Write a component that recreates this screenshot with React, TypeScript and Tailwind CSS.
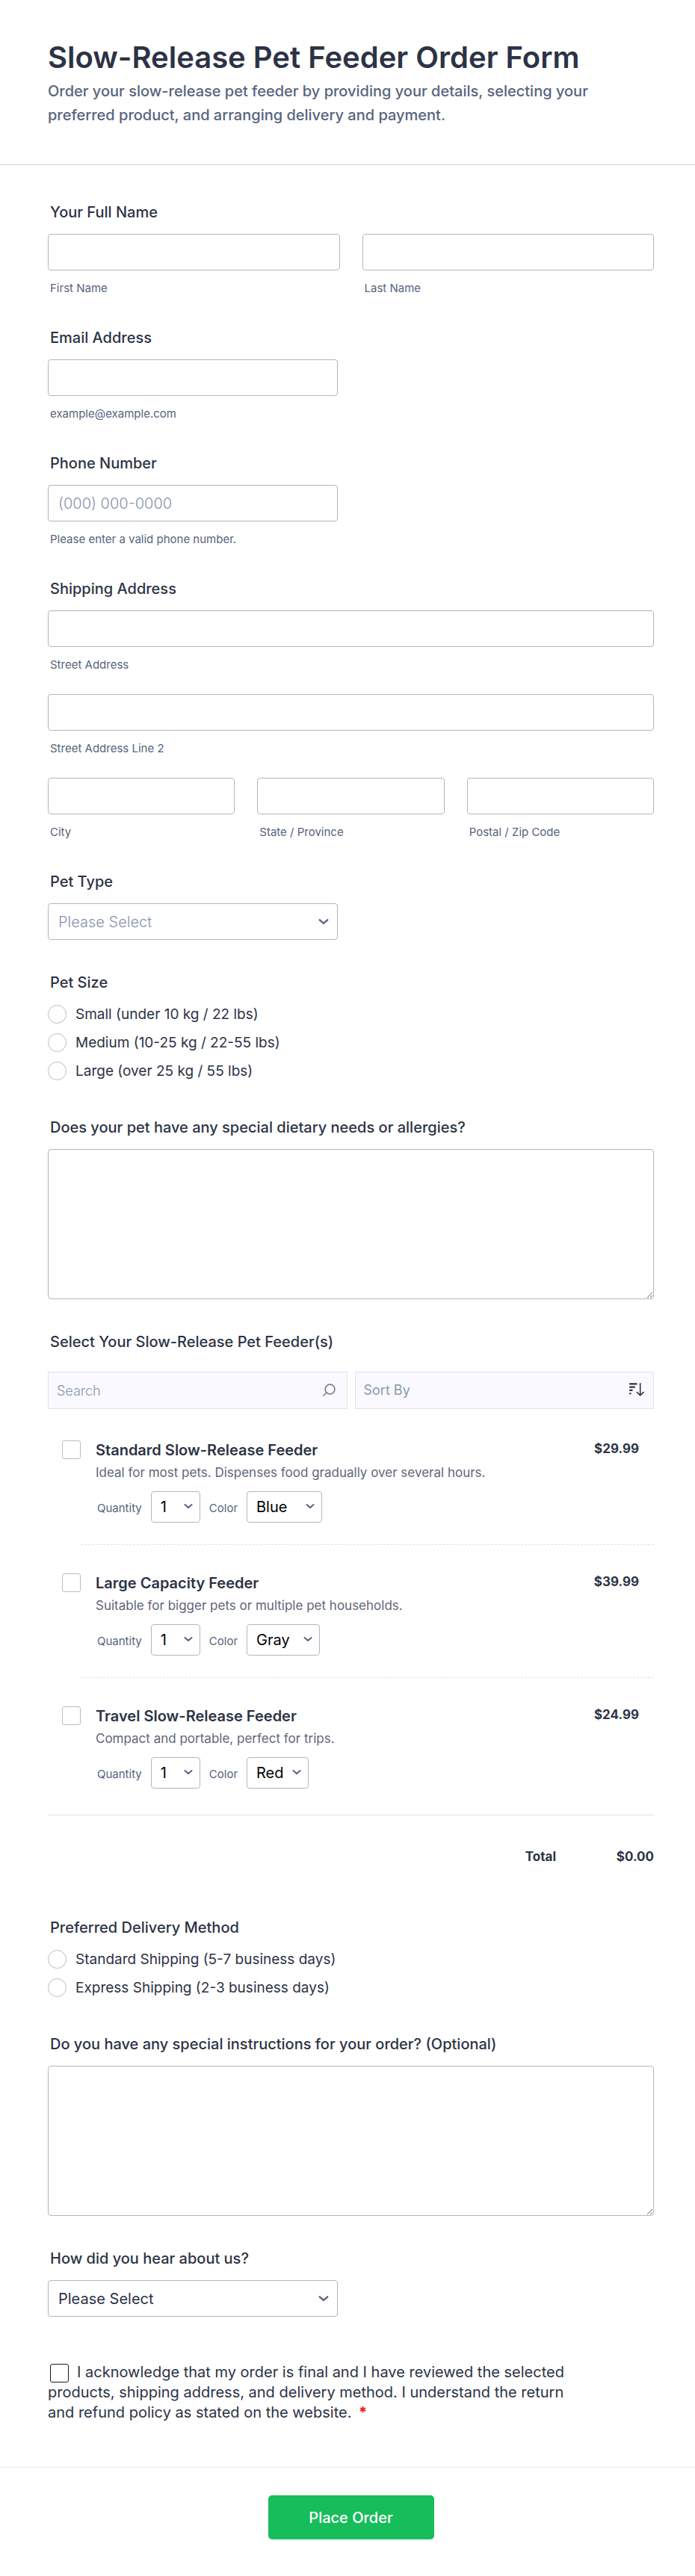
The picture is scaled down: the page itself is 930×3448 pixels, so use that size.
import { useState } from 'react'
import type { ReactNode } from 'react'

const PRODUCTS = [
  {
    id: 'standard',
    name: 'Standard Slow-Release Feeder',
    text: 'Ideal for most pets. Dispenses food gradually over several hours.',
    price: 29.99,
    colors: ['Blue', 'Green', 'White'],
    colorWidth: 'w-[101px]',
  },
  {
    id: 'large',
    name: 'Large Capacity Feeder',
    text: 'Suitable for bigger pets or multiple pet households.',
    price: 39.99,
    colors: ['Gray', 'Black'],
    colorWidth: 'w-[98px]',
  },
  {
    id: 'travel',
    name: 'Travel Slow-Release Feeder',
    text: 'Compact and portable, perfect for trips.',
    price: 24.99,
    colors: ['Red', 'Tan'],
    colorWidth: 'w-[83px]',
  },
]

const SIZES = ['Small (under 10 kg / 22 lbs)', 'Medium (10-25 kg / 22-55 lbs)', 'Large (over 25 kg / 55 lbs)']
const SHIPPING = ['Standard Shipping (5-7 business days)', 'Express Shipping (2-3 business days)']

const box = 'block w-full rounded-[4px] border border-[#b1b6c6] bg-white text-xl text-[#2c3345]'
const label = 'block px-[3px] text-xl leading-6 font-medium text-[#2c3345]'
const check = 'size-[25px] shrink-0 appearance-none border border-[#b8bdc9] bg-white checked:bg-[#2e69ff]'

function Chevron({ className }: { className: string }) {
  return (
    <svg viewBox="0 0 12 8" className={`pointer-events-none absolute ${className}`} fill="none" aria-hidden="true">
      <path d="M1.5 2 6 6l4.5-4" stroke="#57647e" strokeWidth="2" strokeLinecap="round" strokeLinejoin="round" />
    </svg>
  )
}

function TextField({ id, caption, placeholder, type = 'text' }: { id: string; caption: string; placeholder?: string; type?: string }) {
  return (
    <div className="min-w-0 flex-1">
      <input
        id={id}
        type={type}
        placeholder={placeholder}
        className={`${box} h-[49px] px-[13px] placeholder:font-light placeholder:text-[#8894ab]`}
      />
      <label htmlFor={id} className="mt-3.5 block px-[3px] text-[15px] leading-5 text-[#57647e]">
        {caption}
      </label>
    </div>
  )
}

function Group({ title, children }: { title: string; children: ReactNode }) {
  return (
    <fieldset className="min-w-0">
      <legend className={`${label} mb-[17px]`}>{title}</legend>
      {children}
    </fieldset>
  )
}

function SelectField({ id, title, options, muted }: { id: string; title: string; options: string[]; muted?: boolean }) {
  return (
    <div>
      <label htmlFor={id} className={`${label} mb-[17px]`}>{title}</label>
      <div className="relative max-w-[388px]">
        <select id={id} defaultValue="" className={`${box} h-[49px] appearance-none px-[13px] ${muted ? 'font-light text-[#8894ab]' : ''}`}>
          <option value="">Please Select</option>
          {options.map((o) => (
            <option key={o}>{o}</option>
          ))}
        </select>
        <Chevron className="top-5 right-3 w-[14px]" />
      </div>
    </div>
  )
}

function AreaField({ id, title }: { id: string; title: string }) {
  return (
    <div>
      <label htmlFor={id} className={`${label} mb-[17px]`}>{title}</label>
      <textarea id={id} className={`${box} h-[201px] resize-y p-3`} />
    </div>
  )
}

function RadioField({ name, title, options }: { name: string; title: string; options: string[] }) {
  return (
    <Group title={title}>
      <div className="flex flex-col items-start gap-[13px] pt-px pb-1.5">
        {options.map((o) => (
          <label key={o} className="flex items-center gap-3 text-[19px] leading-[25px] text-[#2c3345]">
            <input type="radio" name={name} value={o} className={`${check} rounded-full`} />
            {o}
          </label>
        ))}
      </div>
    </Group>
  )
}

function SmallSelect({ id, title, options, width }: { id: string; title: string; options: string[]; width: string }) {
  return (
    <div className="flex items-center gap-3">
      <label htmlFor={id} className="pt-1 text-[15px] leading-5 text-[#57647e]">{title}</label>
      <div className={`relative ${width}`}>
        <select id={id} className="block h-[42px] w-full appearance-none rounded-[4px] border border-[#b1b6c6] bg-white px-3 text-xl text-black">
          {options.map((o) => (
            <option key={o}>{o}</option>
          ))}
        </select>
        <Chevron className="top-4 right-2.5 w-3" />
      </div>
    </div>
  )
}

export default function App() {
  const [picked, setPicked] = useState<string[]>([])
  const total = PRODUCTS.filter((p) => picked.includes(p.id)).reduce((sum, p) => sum + p.price, 0)

  const toggle = (id: string) =>
    setPicked((ids) => (ids.includes(id) ? ids.filter((i) => i !== id) : [...ids, id]))

  return (
    <form className="bg-white font-['Inter',sans-serif] text-[#2c3345]" onSubmit={(e) => e.preventDefault()}>
      <header className="border-b border-[#d0d4e0] pt-[52px] pr-[55px] pb-[50px] pl-16">
        <h1 className="text-[40px] leading-[50px] font-semibold">Slow-Release Pet Feeder Order Form</h1>
        <p className="mt-1 max-w-[740px] text-xl leading-8 font-medium text-[#57647e]">
          Order your slow-release pet feeder by providing your details, selecting your preferred product, and arranging
          delivery and payment.
        </p>
      </header>

      <main className="flex flex-col gap-11 pt-[51px] pr-[55px] pb-[59px] pl-16">
        <Group title="Your Full Name">
          <div className="flex gap-[30px]">
            <TextField id="first" caption="First Name" />
            <TextField id="last" caption="Last Name" />
          </div>
        </Group>

        <Group title="Email Address">
          <div className="flex max-w-[388px]">
            <TextField id="email" type="email" caption="example@example.com" />
          </div>
        </Group>

        <Group title="Phone Number">
          <div className="flex max-w-[388px]">
            <TextField id="phone" type="tel" placeholder="(000) 000-0000" caption="Please enter a valid phone number." />
          </div>
        </Group>

        <Group title="Shipping Address">
          <div className="flex flex-col gap-[29px]">
            <TextField id="street" caption="Street Address" />
            <TextField id="street2" caption="Street Address Line 2" />
            <div className="flex gap-[30px]">
              <TextField id="city" caption="City" />
              <TextField id="state" caption="State / Province" />
              <TextField id="zip" caption="Postal / Zip Code" />
            </div>
          </div>
        </Group>

        <div className="flex flex-col gap-[45px]">
          <SelectField id="pet" title="Pet Type" options={['Dog', 'Cat', 'Other']} muted />
          <RadioField name="size" title="Pet Size" options={SIZES} />
          <AreaField id="diet" title="Does your pet have any special dietary needs or allergies?" />

          <section>
            <h2 className={label}>Select Your Slow-Release Pet Feeder(s)</h2>
            <div className="mt-7 flex gap-2.5">
              <div className="relative flex-1">
                <input
                  type="search"
                  aria-label="Search"
                  placeholder="Search"
                  className="block h-[50px] w-full border border-[#dfe4f0] bg-[#f9f9ff] px-[11px] text-lg placeholder:font-light placeholder:text-[#8894ab]"
                />
                <svg viewBox="0 0 17 17" className="pointer-events-none absolute top-4 right-4 w-[17px]" fill="none" aria-hidden="true">
                  <circle cx="9.5" cy="7.5" r="6.4" stroke="#6d7287" strokeWidth="1.5" />
                  <path d="m5 12-4 4" stroke="#6d7287" strokeWidth="1.5" strokeLinecap="round" />
                </svg>
              </div>
              <div className="relative flex-1">
                <select
                  aria-label="Sort By"
                  className="block h-[50px] w-full appearance-none border border-[#dfe4f0] bg-[#f9f9ff] px-[11px] text-lg text-[#8c9aae]"
                >
                  <option>Sort By</option>
                  <option>Price</option>
                  <option>Name</option>
                </select>
                <svg viewBox="0 0 20 18" className="pointer-events-none absolute top-[15px] right-[13px] w-5" fill="none" aria-hidden="true">
                  <path d="M1 1.4h8.7M1 5.6h6M1 9.9h2.7M1 14.3h.8" stroke="#2c3345" strokeWidth="2.1" strokeLinecap="round" />
                  <path d="M14.7.8v15.8M10.4 12.6l4.3 4.2 4.3-4.2" stroke="#2c3345" strokeWidth="1.6" strokeLinecap="round" strokeLinejoin="round" />
                </svg>
              </div>
            </div>

            <ul className="mt-1">
              {PRODUCTS.map((p) => (
                <li key={p.id} className="group flex pl-[19px]">
                  <input
                    id={p.id}
                    type="checkbox"
                    checked={picked.includes(p.id)}
                    onChange={() => toggle(p.id)}
                    className={`${check} mt-[38px] rounded-[3px]`}
                  />
                  <div className="flex flex-1 items-start justify-between border-b border-dashed border-[#dfe2ee] pt-[39px] pr-5 pb-[29px] pl-5 group-last:border-0">
                    <div>
                      <label htmlFor={p.id} className="block text-xl leading-6 font-semibold">{p.name}</label>
                      <p className="mt-1.5 text-[17px] leading-6 text-[#5f6678]">{p.text}</p>
                      <div className="mt-[13px] flex gap-3 pl-0.5">
                        <SmallSelect id={`${p.id}-qty`} title="Quantity" options={['1', '2', '3']} width="w-[66px]" />
                        <SmallSelect id={`${p.id}-color`} title="Color" options={p.colors} width={p.colorWidth} />
                      </div>
                    </div>
                    <span className="text-[17px] leading-5 font-bold">${p.price}</span>
                  </div>
                </li>
              ))}
            </ul>

            <div className="mt-1.5 flex justify-end border-t border-[#dfe2ee] pt-[43px] pb-[26px] text-[17px] leading-6 font-bold">
              <span>Total</span>
              <span className="w-[131px] text-right">${total.toFixed(2)}</span>
            </div>
          </section>

          <RadioField name="delivery" title="Preferred Delivery Method" options={SHIPPING} />
          <AreaField id="notes" title="Do you have any special instructions for your order? (Optional)" />
          <SelectField id="source" title="How did you hear about us?" options={['Friend', 'Social Media', 'Search Engine']} />

          <div className="max-w-[700px] pt-4 text-xl leading-[27px]">
            <input id="ack" type="checkbox" className="mr-[11px] ml-[3px] size-[25px] appearance-none rounded-[3px] border border-[#1c1826] bg-white align-middle checked:bg-[#2e69ff]" />
            <label htmlFor="ack">
              I acknowledge that my order is final and I have reviewed the selected products, shipping address, and
              delivery method. I understand the return and refund policy as stated on the website.{' '}
              <span className="ml-1 font-bold text-[#ff0f0f]">*</span>
            </label>
          </div>
        </div>
      </main>

      <footer className="flex justify-center border-t border-[#e6e6f0] pt-[37px] pr-[55px] pb-[50px] pl-16">
        <button type="submit" className="h-[59px] min-w-[222px] rounded-[5px] bg-[#18bd5b] px-12 text-xl font-medium text-white">
          Place Order
        </button>
      </footer>
    </form>
  )
}
